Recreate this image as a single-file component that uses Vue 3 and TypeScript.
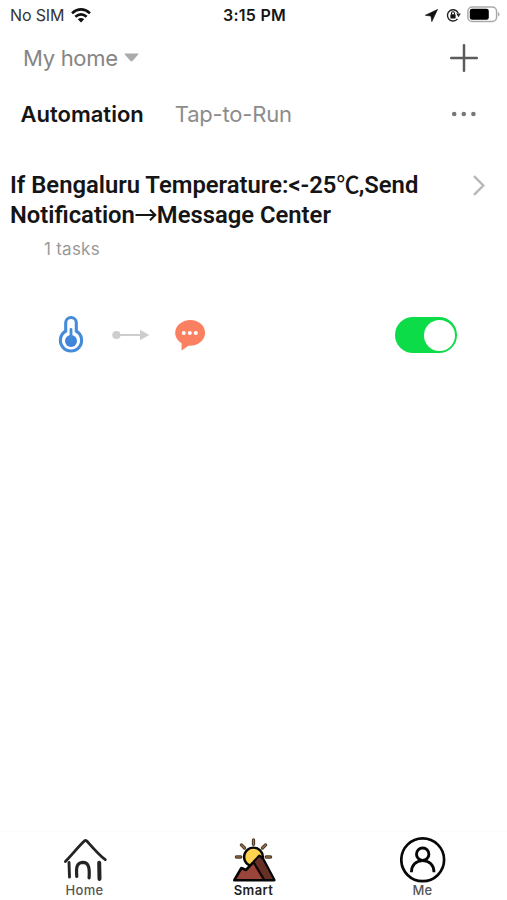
<script setup lang="ts">
import { ref } from 'vue'

const enabled = ref(true)
const activeTab = ref<'automation' | 'tap'>('automation')
const rays: number[] = [-90, -45, 0, 45, 90]
</script>

<template>
  <div class="screen">
    <header class="status">
      <div class="status-left">
        <span class="carrier">No SIM</span>
        <svg class="wifi" width="20" height="15" viewBox="0 0 20 15">
          <g fill="none" stroke="#111" stroke-width="2.6">
            <path d="M1 5.2Q10-2.4 19 5.2" />
            <path d="M4.3 8.8Q10 4 15.7 8.8" />
          </g>
          <path d="M6.8 11.3Q10 8.6 13.2 11.3L10 14.4Z" fill="#111" />
        </svg>
      </div>
      <span class="time">3:15 PM</span>
      <div class="status-right">
        <svg width="13" height="13" viewBox="0 0 13 13"><path d="M12.5.5.4 6.3 6 7 6.8 12.5Z" fill="#111" stroke="#111" stroke-width=".7" stroke-linejoin="round" /></svg>
        <svg class="lock" width="15" height="14" viewBox="0 0 15 14">
          <path d="M12.2 5.2A5.6 5.6 0 1 0 11.5 10.8" fill="none" stroke="#222" stroke-width="1.4" />
          <path d="M10.2 5.6h4.6l-2.3 3.6Z" fill="#222" />
          <rect x="4.4" y="6.3" width="5.2" height="4.1" rx=".6" fill="#111" />
          <path d="M5.5 6.5V5.2a1.5 1.5 0 0 1 3 0v1.3" fill="none" stroke="#111" stroke-width="1.1" />
        </svg>
        <svg class="battery" width="33" height="17" viewBox="0 0 33 17">
          <rect x=".9" y=".9" width="28.7" height="14.7" rx="4.3" fill="none" stroke="#aaa" stroke-width="1.5" />
          <rect x="2.8" y="2.8" width="19" height="10.9" rx="2.3" fill="#000" />
          <path d="M31 6v4.6q1.5-.8 1.5-2.3T31 6Z" fill="#aaa" />
        </svg>
      </div>
    </header>

    <div class="home-row">
      <button class="home-select">
        <span class="home-name">My home</span>
        <svg width="15" height="9" viewBox="0 0 15 9"><path d="M1 .5h13q.7.3.2.9L8.5 8q-1 .9-2 0L.8 1.4Q.3.8 1 .5Z" fill="#aaa" /></svg>
      </button>
      <svg width="28" height="28" viewBox="0 0 28 28"><path d="M14 1.2v25.6M1.2 14h25.6" stroke="#5c5c5c" stroke-width="2.5" stroke-linecap="round" /></svg>
    </div>

    <nav class="tabs">
      <button class="tab tab-auto" :class="{ active: activeTab === 'automation' }" @click="activeTab = 'automation'">Automation</button>
      <button class="tab tab-tap" :class="{ active: activeTab === 'tap' }" @click="activeTab = 'tap'">Tap-to-Run</button>
      <svg class="more" width="26" height="6" viewBox="0 0 26 6" fill="#777">
        <circle cx="3.2" cy="3" r="2.3" /><circle cx="12.8" cy="3" r="2.3" /><circle cx="22.4" cy="3" r="2.3" />
      </svg>
    </nav>

    <main class="rule">
      <div class="rule-head">
        <h2 class="rule-title">
          <span class="line line-one">If Bengaluru Temperature:&lt;-25<span class="unit">℃</span>,Send</span>
          <span class="line line-two">Notification<svg class="arrow" width="22" height="14" viewBox="0 0 22 14"><path d="M.5 7h19.5M15 1.7 20.3 7 15 12.3" fill="none" stroke="#151515" stroke-width="2" /></svg>Message Center</span>
        </h2>
        <svg class="chevron" width="14" height="21" viewBox="0 0 14 21"><path d="m2 1.2 9.3 9.3L2 19.8" fill="none" stroke="#b7b7b7" stroke-width="2.4" /></svg>
      </div>
      <p class="tasks">1 tasks</p>
      <div class="rule-flow">
        <svg width="26" height="40" viewBox="0 0 26 40">
          <path d="M7.7 16.2V7.8a5.3 5.3 0 0 1 10.6 0v8.4a10.6 10.6 0 1 1-10.6 0Z" fill="none" stroke="#458bd9" stroke-width="3.1" />
          <circle cx="13" cy="26" r="6" fill="#3f86db" />
          <path d="M13 14.5v11" stroke="#458bd9" stroke-width="2.8" stroke-linecap="round" />
        </svg>
        <svg class="link" width="38" height="12" viewBox="0 0 38 12" fill="#cdcdcd">
          <circle cx="4.4" cy="6" r="4.1" /><path d="M5 5h23V.8L37.3 6 28 11.2V7H5Z" />
        </svg>
        <svg width="31" height="32" viewBox="0 0 31 32">
          <path d="M15.4.9C7.2.9.2 6.5.2 13.8c0 4.5 2.6 8.2 6.4 10.5l-.1 7.1 6.9-4.6c9.5.8 16.7-5.7 16.7-13C30.1 6.5 23.7.9 15.4.9Z" fill="#fa8061" />
          <g fill="#fff"><circle cx="8.8" cy="14.1" r="2" /><circle cx="14.8" cy="14.1" r="2" /><circle cx="20.8" cy="14.1" r="2" /></g>
        </svg>
        <button class="switch" :class="{ on: enabled }" role="switch" :aria-checked="enabled" @click="enabled = !enabled">
          <span class="knob"></span>
        </button>
      </div>
    </main>

    <footer class="bottom-nav">
      <a class="nav-item">
        <svg width="46" height="46" viewBox="0 0 46 46" fill="none" stroke="#242424" stroke-linecap="round" stroke-linejoin="round">
          <path d="M3.4 24.5C10.5 17.5 15 11 22.6 3.8Q24 3 25.3 4.5C31 11 37 18 43.3 22.7" stroke-width="2.8" />
          <path d="m7 25.5.5 14.6" stroke-width="2.9" /><path d="M14.8 39.5C14 31 14.5 25.6 20.7 25.3c6.5 0 7 6.5 6.4 15.5" stroke-width="3.2" />
          <path d="m37.2 25.7.3 16.2" stroke-width="4" />
        </svg>
        <span>Home</span>
      </a>
      <a class="nav-item smart">
        <svg width="46" height="46" viewBox="0 0 46 46" stroke-linejoin="round">
          <g v-for="angle in rays" :key="angle" :transform="`rotate(${angle} 22.5 20)`" stroke-linecap="round">
            <path d="M22.5 2.9v4.4" stroke="#4a3929" stroke-width="3.3" /><path d="M22.5 2.9v4.4" stroke="#a37848" stroke-width="1.2" />
          </g>
          <circle cx="22.5" cy="20" r="9.4" fill="#ffd34f" stroke="#050505" stroke-width="2.4" />
          <path d="M3.3 43.2 10.4 31l4.5 2 7.6-7.8 5.8-6.4 4 3.5 11 20.9Z" fill="#9b4439" stroke="#060606" stroke-width="2.6" />
          <path d="m23.2 25.6 5.1-5.5 3.2 3 10.3 18.9H33Z" fill="#673027" />
          <path d="m22.5 25.2 10.8 18" fill="none" stroke="#120806" stroke-width="2.3" />
        </svg>
        <span>Smart</span>
      </a>
      <a class="nav-item">
        <svg width="46" height="46" viewBox="0 0 46 46" fill="none" stroke="#070707">
          <circle cx="22.7" cy="22.8" r="21.4" stroke-width="2.7" />
          <circle cx="22.7" cy="17.2" r="6.2" stroke-width="2.9" /><path d="M11.4 35.2c0-7 4.6-11.5 11.3-11.5s11.3 4.5 11.3 11.5" stroke-width="2.8" />
        </svg>
        <span>Me</span>
      </a>
    </footer>
  </div>
</template>

<style>
body { margin: 0; background: #fff; }
</style>

<style scoped>
.screen { width: 507px; height: 900px; display: flex; flex-direction: column; background: #fff; overflow: hidden; font-family: Inter, "Liberation Sans", sans-serif; color: #151515; }
svg { display: block; flex: none; }
button { border: 0; padding: 0; margin: 0; background: none; font: inherit; color: inherit; }
.status { height: 30px; box-sizing: border-box; padding: 0 7px 0 10px; display: grid; grid-template-columns: 1fr auto 1fr; align-items: center; }
.status-left, .status-right { display: flex; align-items: center; }
.carrier { font-size: 16px; line-height: 30px; letter-spacing: -.15px; color: #333; }
.wifi { margin-left: 7px; }
.time { font-size: 16px; font-weight: 600; line-height: 30px; letter-spacing: .25px; margin-left: -1px; }
.status-right { justify-content: flex-end; }
.lock { margin: 0 6px 0 8px; }
.battery { margin-top: -2px; }
.home-row { height: 55px; display: flex; align-items: center; justify-content: space-between; padding: 0 29px 0 23px; }
.home-select { display: flex; align-items: center; gap: 6px; }
.home-name { font-size: 22px; line-height: 30px; letter-spacing: -.3px; color: #858585; }
.tabs { height: 58px; display: flex; align-items: center; padding: 0 30px 0 20.5px; }
.tab { font-size: 22px; line-height: 30px; color: #8c8c8c; white-space: nowrap; }
.tab-auto { margin-right: 31px; }
.tab-tap { letter-spacing: -.2px; }
.tab.active { font-weight: 600; color: #151515; }
.more { margin-left: auto; }
.rule { padding: 27px 21px 0 10px; flex: 1; }
.rule-head { display: flex; justify-content: space-between; align-items: flex-start; }
.rule-title { margin: 0; font: 600 23.8px/30px Roboto, "Noto Sans CJK SC", sans-serif; }
.line { display: block; height: 30px; white-space: nowrap; }
.unit { font-family: "Noto Sans CJK SC", sans-serif; font-weight: 500; font-size: 23px; line-height: 1; letter-spacing: -.8px; }
.arrow { display: inline-block; vertical-align: 1px; }
.chevron { margin-top: 5px; }
.tasks { margin: 7px 0 0 34px; font-size: 17px; line-height: 24px; letter-spacing: .25px; color: #999; }
.rule-flow { display: flex; align-items: center; padding: 54px 29px 0 48px; }
.link { margin: 0 25px 0 28px; }
.switch { width: 62px; height: 36px; margin-left: auto; padding: 2px; border-radius: 18px; background: #ccc; display: flex; align-items: center; }
.switch.on { background: #0bdc48; justify-content: flex-end; }
.knob { width: 31px; height: 31px; border-radius: 50%; background: #fff; }
.bottom-nav { height: 69px; box-sizing: border-box; border-top: 1px solid #fcfcfc; display: grid; grid-template-columns: repeat(3, 1fr); padding-top: 5px; }
.nav-item { display: flex; flex-direction: column; align-items: center; font-size: 13px; line-height: 14px; letter-spacing: .35px; font-weight: 500; color: #555; }
.smart { font-weight: 600; color: #222; }
</style>
